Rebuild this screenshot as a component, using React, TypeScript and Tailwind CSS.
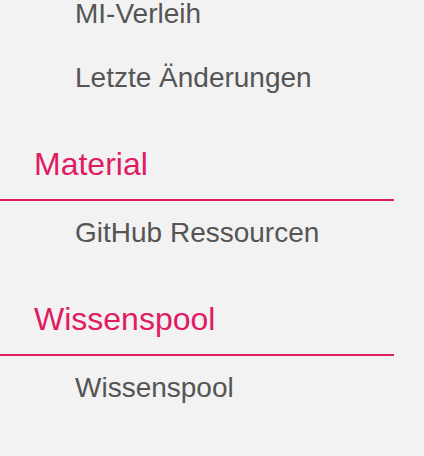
import React from 'react';

const sections = [
  { title: null, items: ['MI-Verleih', 'Letzte Änderungen'] },
  { title: 'Material', items: ['GitHub Ressourcen'] },
  { title: 'Wissenspool', items: ['Wissenspool'] },
];

export default function App() {
  return (
    <div className="min-h-[456px] w-full overflow-hidden bg-[#f2f2f2] font-['Liberation_Sans',Arial,sans-serif]">
      <nav className="w-[394px] -mt-[18px]">
        {sections.map((section, i) => (
          <div key={i}>
            {section.title && (
              <h2 className="mt-[34px] border-b-2 border-[#e01a63] pb-[15px] pl-[34px] text-[32px] leading-[40px] text-[#e01a63]">
                {section.title}
              </h2>
            )}
            <ul>
              {section.items.map((item) => (
                <li key={item} className="pl-[75px] text-[28px] leading-[64px] text-[#555555]">
                  {item}
                </li>
              ))}
            </ul>
          </div>
        ))}
      </nav>
    </div>
  );
}
